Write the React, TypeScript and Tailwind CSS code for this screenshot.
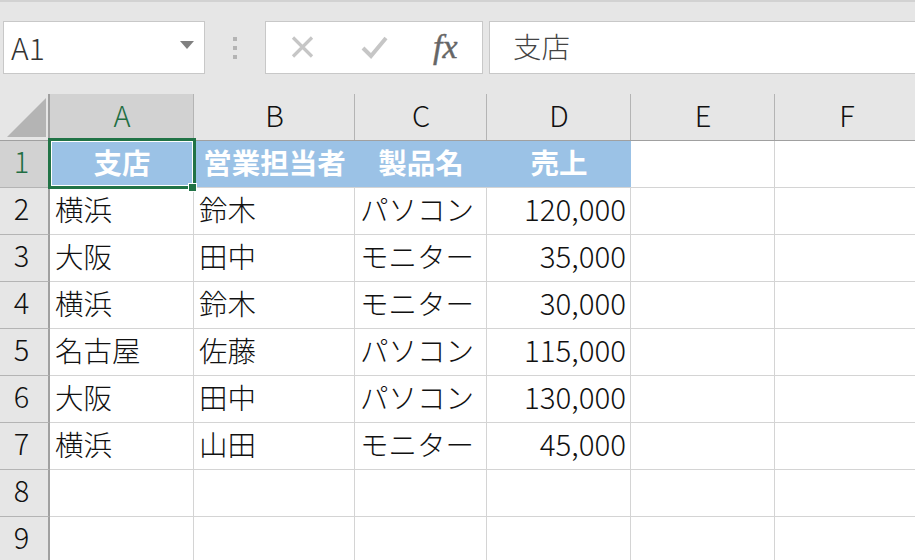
const font = "[font-family:'Noto_Sans_CJK_JP','Noto_Sans_CJK_SC',sans-serif]";

const rows: [string, string, string, string][] = [
  ["横浜", "鈴木", "パソコン", "120,000"],
  ["大阪", "田中", "モニター", "35,000"],
  ["横浜", "鈴木", "モニター", "30,000"],
  ["名古屋", "佐藤", "パソコン", "115,000"],
  ["大阪", "田中", "パソコン", "130,000"],
  ["横浜", "山田", "モニター", "45,000"],
  ["", "", "", ""],
  ["", "", "", ""],
];

function ColHead({ label, active }: { label: string; active?: boolean }) {
  return (
    <div className={`flex items-center justify-center h-[47px] pb-[5px] border-b border-b-[#a0a0a0] relative text-[29px] font-light ${active ? "bg-[#d2d2d2] text-[#1f6e43]" : "bg-[#e6e6e6] text-[#111]"}`}>
      {label}
      <span className="absolute right-0 top-0 bottom-0 w-px bg-[#b4b4b4]" />
    </div>
  );
}

function RowHead({ label, active }: { label: string; active?: boolean }) {
  return (
    <div className={`flex items-center justify-center h-[47px] pb-[6px] pr-[5px] border-r-2 border-b border-r-[#a0a0a0] border-b-[#b4b4b4] text-[29px] font-light ${active ? "bg-[#d2d2d2] text-[#1f6e43]" : "bg-[#e6e6e6] text-[#111]"}`}>
      {label}
    </div>
  );
}

function Cell({ children, right, last }: { children?: string; right?: boolean; last?: boolean }) {
  return (
    <div className={`flex items-center h-[47px] border-b border-b-[#d4d4d4] font-light text-[#111] whitespace-nowrap overflow-hidden ${last ? "" : "border-r border-r-[#d4d4d4]"} ${right ? "justify-end pr-[4px] pb-[6px] text-[29.5px]" : "pl-[5px] pb-[4px] text-[28.5px]"}`}>
      {children}
    </div>
  );
}

function Head({ children }: { children: string }) {
  return (
    <div className="flex items-center justify-center h-[47px] pb-[4px] bg-[#9bc2e6] text-white text-[28.5px] font-bold border-b border-b-[#d4d4d4] whitespace-nowrap">
      {children}
    </div>
  );
}

export default function App() {
  return (
    <div className={`w-[915px] h-[560px] overflow-hidden bg-white ${font}`}>
      <div className="h-[94px] bg-[#e6e6e6] border-t-2 border-t-[#d2d2d2] pt-[19px] flex items-start">
        <div className="ml-[3px] w-[202px] h-[53px] bg-white border border-[#c8c8c8] flex items-center justify-between pl-[7px] pr-[10px]">
          <span className="text-[30px] font-light text-[#333]">A1</span>
          <svg width="14" height="9" viewBox="0 0 14 9" className="mb-[5px]">
            <path d="M0 0H14L7 8Z" fill="#808080" />
          </svg>
        </div>
        <div className="w-[60px] flex flex-col items-center gap-[5px] pt-[16px]">
          <span className="w-[4px] h-[4px] bg-[#b4b4b4]" />
          <span className="w-[4px] h-[4px] bg-[#b4b4b4]" />
          <span className="w-[4px] h-[4px] bg-[#b4b4b4]" />
        </div>
        <div className="w-[218px] h-[53px] bg-white border border-[#c8c8c8] flex items-center pl-[25px] pb-[2px]">
          <svg width="24" height="24" viewBox="0 0 24 24">
            <path d="M2 2.5 21 21.5M21 2.5 2 21.5" stroke="#c6c6c6" strokeWidth="3.2" fill="none" />
          </svg>
          <svg width="28" height="24" viewBox="0 0 28 24" className="ml-[46px]">
            <path d="M2 13 10 21 25 3" stroke="#c6c6c6" strokeWidth="4" fill="none" />
          </svg>
          <span className="ml-[44px] text-[34px] leading-none italic text-[#666] [font-family:'Liberation_Serif',serif] [-webkit-text-stroke:0.4px_#666]">fx</span>
        </div>
        <div className="ml-[6px] flex-1 h-[53px] bg-white border-y border-l border-[#c8c8c8] flex items-center pl-[23px] pb-[3px] text-[28.5px] font-light text-[#444]">
          支店
        </div>
      </div>

      <div className="relative grid grid-cols-[50px_144px_161px_132px_144px_144px_144px] bg-white">
        <div className="h-[47px] bg-[#e6e6e6] border-b border-b-[#a0a0a0] border-r-2 border-r-[#a0a0a0] flex items-end justify-end pr-[2px] pb-[3px]">
          <svg width="39" height="39" viewBox="0 0 39 39">
            <path d="M39 0V39H0Z" fill="#b4b4b4" />
          </svg>
        </div>
        <ColHead label="A" active />
        <ColHead label="B" />
        <ColHead label="C" />
        <ColHead label="D" />
        <ColHead label="E" />
        <ColHead label="F" />

        <RowHead label="1" active />
        <Head>支店</Head>
        <Head>営業担当者</Head>
        <Head>製品名</Head>
        <Head>売上</Head>
        <Cell />
        <Cell last />

        {rows.map((r, i) => (
          <div key={i} className="contents">
            <RowHead label={String(i + 2)} />
            <Cell>{r[0]}</Cell>
            <Cell>{r[1]}</Cell>
            <Cell>{r[2]}</Cell>
            <Cell right>{r[3]}</Cell>
            <Cell />
            <Cell last />
          </div>
        ))}

        <div className="absolute left-[48px] top-[44px] w-[148px] h-[51px] border-[3px] border-[#217346] outline outline-1 -outline-offset-4 outline-white pointer-events-none" />
        <div className="absolute left-[188px] top-[89px] w-[9px] h-[9px] bg-[#217346] border border-white" />
      </div>
    </div>
  );
}
